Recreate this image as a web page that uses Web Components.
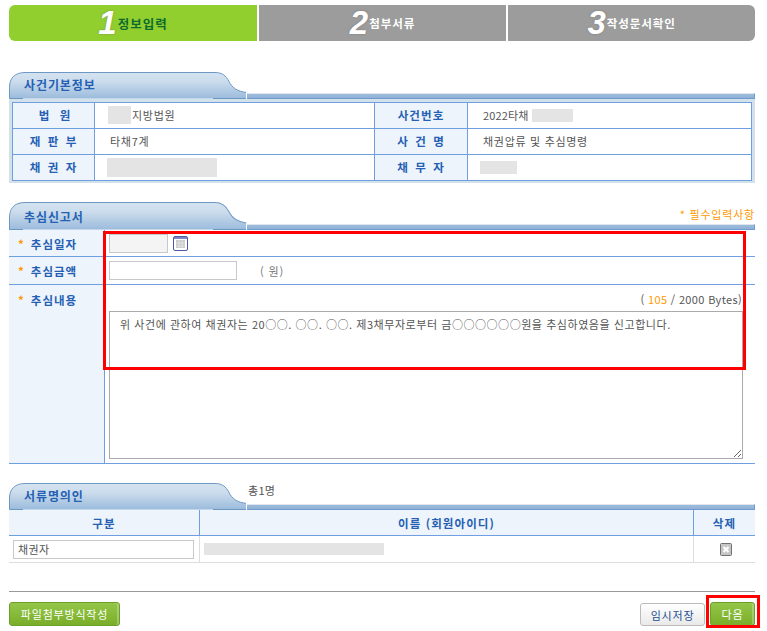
<!DOCTYPE html>
<html lang="ko">
<head>
<meta charset="utf-8">
<title>추심신고서</title>
<style>
  html, body { margin: 0; padding: 0; background: #fff; }
  body { font: 11px "Noto Sans CJK KR", "Liberation Sans", sans-serif; color: #555; }
</style>
</head>
<body>
<case-page>
  <wiz-steps>
    <wiz-step num="1" active>정보입력</wiz-step>
    <wiz-step num="2">첨부서류</wiz-step>
    <wiz-step num="3">작성문서확인</wiz-step>
  </wiz-steps>

  <sec-head style="margin-top:31px">사건기본정보</sec-head>
  <case-info></case-info>

  <sec-head style="margin-top:19px;height:28px;--name-top:5px">추심신고서<span slot="side" class="req">* 필수입력사항</span></sec-head>
  <report-form></report-form>

  <sec-head style="margin-top:19px">서류명의인<span slot="side">총1명</span></sec-head>
  <party-table></party-table>

  <page-foot></page-foot>
</case-page>

<script>
const KR = '"Noto Sans CJK KR", "Liberation Sans", sans-serif';

class CasePage extends HTMLElement {
  constructor() {
    super();
    this.attachShadow({ mode: 'open' }).innerHTML = `
      <style>
        :host { display: block; position: relative; width: 755px; height: 631px; padding: 5px 0 0 9px; box-sizing: border-box; }
        .mark { position: absolute; border: 3px solid #f00; box-sizing: border-box; pointer-events: none; }
        .m1 { left: 103px; top: 231px; width: 643px; height: 139px; }
        .m2 { left: 706px; top: 595px; width: 54px; height: 33px; }
      </style>
      <slot></slot>
      <div class="mark m1"></div>
      <div class="mark m2"></div>`;
  }
}

class WizSteps extends HTMLElement {
  constructor() {
    super();
    this.attachShadow({ mode: 'open' }).innerHTML = `
      <style>
        :host { display: grid; grid-template-columns: 248px 247px 247px; column-gap: 2px; height: 36px; border-radius: 6px; overflow: hidden; }
      </style>
      <slot></slot>`;
  }
}

class WizStep extends HTMLElement {
  constructor() {
    super();
    const num = this.getAttribute('num');
    this.attachShadow({ mode: 'open' }).innerHTML = `
      <style>
        :host { display: flex; align-items: center; justify-content: center; background: #9c9c9c; color: #fff; font: bold 11.5px ${KR}; letter-spacing: .9px; }
        :host([active]) { background: #91cf2f; color: #0d6b2b; font-size: 12.5px; letter-spacing: 1px; }
        b { font: italic bold 33px "Liberation Sans", sans-serif; color: #fff; letter-spacing: 0; margin-right: 1px; text-shadow: 0 0 2px rgba(90,90,90,.55); line-height: 36px; }
      </style>
      <b>${num}</b><span><slot></slot></span>`;
  }
}

class SecHead extends HTMLElement {
  constructor() {
    super();
    this.attachShadow({ mode: 'open' }).innerHTML = `
      <style>
        :host { display: flex; height: 27px; position: relative; font: bold 12px ${KR}; color: #2460b4; letter-spacing: .9px; }
        .tab { flex: 0 0 238px; position: relative; }
        svg { display: block; height: 100%; }
        .name { position: absolute; left: 15px; top: var(--name-top, 3px); line-height: 20px; }
        .rest { flex: 1; display: flex; flex-direction: column; justify-content: flex-end; }
        .side { flex: 1; display: flex; font: 11px ${KR}; color: #555; letter-spacing: .3px; }
        ::slotted(span) { line-height: 14px; margin: 0 0 0 1px; }
        ::slotted(.req) { margin: 5px 0 0 auto; color: #f90; letter-spacing: .8px; }
        .bar { height: 6px; box-sizing: border-box; background: linear-gradient(#9cbbdc, #90b1d6); border-top: 1px solid #dfe5ec; border-bottom: 1px solid #6f9bd0; border-right: 1px solid #6f9bd0; }
      </style>
      <div class="tab">
        <svg width="238" viewBox="0 0 238 27" preserveAspectRatio="none">
          <defs><linearGradient id="g" x1="0" y1="0" x2="0" y2="1"><stop offset="0" stop-color="#d5e3f0"/><stop offset=".35" stop-color="#cbdcec"/><stop offset="1" stop-color="#9bbbdc"/></linearGradient></defs>
          <path d="M.5 26.5V15C.5 6 6 .5 16 .5H206c7 0 11 3 14 9 3 6 8 10 18 11v6z" fill="url(#g)" stroke="#6e98c4"/>
          <path d="M14 26.5H204" stroke="#c4d7ea"/>
          <path d="M237.5 20v7" stroke="#fff"/>
        </svg>
        <span class="name"><slot></slot></span>
      </div>
      <div class="rest">
        <div class="side"><slot name="side"></slot></div>
        <div class="bar"></div>
      </div>`;
  }
}

const cellCss = `
  .lab { background: #eef4fb; color: #2460b4; font: bold 11.5px ${KR}; display: flex; align-items: center; justify-content: center; letter-spacing: 1.1px; padding-bottom: 2px; }
  .val { display: flex; align-items: center; min-width: 0; padding-bottom: 1px; }
  .blk { display: inline-block; background: #e4e4e4; }
`;

class CaseInfo extends HTMLElement {
  constructor() {
    super();
    this.attachShadow({ mode: 'open' }).innerHTML = `
      <style>
        :host { display: block; height: 84px; padding: 3px 3px 0; box-sizing: border-box; background: #d3e1eb; }
        ${cellCss}
        .grid { display: grid; grid-template-columns: 82px 280px 93px 1fr; grid-template-rows: 26px 26px 25px; background: #fff; border: 1px solid #6f9fe0; box-sizing: border-box; }
        .grid > div { border-bottom: 1px solid #6f9fe0; box-sizing: border-box; }
        .grid > div:nth-last-child(-n+4) { border-bottom: 0; }
        .grid > div:nth-child(4n+1), .grid > div:nth-child(4n+2), .grid > div:nth-child(4n+3) { border-right: 1px solid #6f9fe0; }
        .val { font-size: 11px; color: #555; letter-spacing: .7px; }
        .sp { word-spacing: 2px; }
      </style>
      <div class="grid">
        <div class="lab" style="word-spacing:5px;padding-left:3px">법 원</div>
        <div class="val" style="padding-left:13px"><span class="blk" style="width:23px;height:18px;margin-right:1px"></span>지방법원</div>
        <div class="lab">사건번호</div>
        <div class="val" style="padding-left:15px;letter-spacing:.15px">2022타채<span class="blk" style="width:41px;height:13px;margin-left:3px"></span></div>
        <div class="lab sp">재 판 부</div>
        <div class="val" style="padding-left:15px">타채7계</div>
        <div class="lab sp">사 건 명</div>
        <div class="val" style="padding-left:15px">채권압류 및 추심명령</div>
        <div class="lab sp">채 권 자</div>
        <div class="val" style="padding-left:12px"><span class="blk" style="width:110px;height:19px"></span></div>
        <div class="lab sp">채 무 자</div>
        <div class="val" style="padding-left:12px"><span class="blk" style="width:37px;height:13px"></span></div>
      </div>`;
  }
}

class ReportForm extends HTMLElement {
  constructor() {
    super();
    this.attachShadow({ mode: 'open' }).innerHTML = `
      <style>
        :host { display: grid; grid-template-columns: 96px 1fr; grid-template-rows: 27px 28px 179px; box-sizing: border-box; }
        .lab { background: #eef4fb; color: #2460b4; font: bold 11.5px ${KR}; letter-spacing: 1px; border-right: 1px solid #6f9fe0; border-bottom: 1px solid #6f9fe0; padding: 1px 0 0 9px; display: flex; align-items: center; }
        .lab i { color: #f90; font-style: normal; margin-right: 6px; }
        .lab.top { align-items: flex-start; padding-top: 7px; }
        .val { border-bottom: 1px solid #6f9fe0; padding-left: 4px; display: flex; align-items: center; color: #777; font-size: 11px; min-width: 0; }
        input { box-sizing: border-box; height: 19px; border: 1px solid #c8c8c8; padding: 0; margin: 0; display: block; outline: 0; }
        .date { width: 59px; background: #f4f4f4; }
        .amt { width: 128px; background: #fff; }
        svg { display: block; margin-left: 5px; }
        .unit { margin-left: 23px; letter-spacing: .9px; }
        .memo { display: block; padding: 0 0 0 4px; }
        .count { height: 26px; line-height: 28px; text-align: right; padding-right: 13px; color: #555; letter-spacing: .35px; }
        .count em { font-style: normal; color: #f90; }
        textarea { display: block; box-sizing: border-box; width: 634px; height: 148px; border: 1px solid #aaa; padding: 6px 10px; margin: 0; outline: 0; font: 11px ${KR}; color: #555; letter-spacing: .55px; line-height: 13px; }
      </style>
      <div class="lab"><i>*</i>추심일자</div>
      <div class="val">
        <input class="date" type="text" aria-label="추심일자">
        <svg width="15" height="15" viewBox="0 0 15 15"><rect x=".5" y=".5" width="14" height="14" rx="1.5" fill="#fff" stroke="#4d58a8"/><rect x="1" y="1" width="13" height="2" fill="#7d86c4"/><rect x="3" y="4" width="9" height="8" fill="#c9c9c9"/><path d="M6 4v8M9 4v8M3 7h9M3 10h9" stroke="#e2e2e2"/></svg>
      </div>
      <div class="lab"><i>*</i>추심금액</div>
      <div class="val"><input class="amt" type="text" aria-label="추심금액"><span class="unit">( 원)</span></div>
      <div class="lab top"><i>*</i>추심내용</div>
      <div class="val memo">
        <div class="count">( <em>105</em> / 2000 Bytes)</div>
        <textarea aria-label="추심내용">위 사건에 관하여 채권자는 20○○. ○○. ○○. 제3채무자로부터 금○○○○○○원을 추심하였음을 신고합니다.</textarea>
      </div>`;
  }
}

class PartyTable extends HTMLElement {
  constructor() {
    super();
    this.attachShadow({ mode: 'open' }).innerHTML = `
      <style>
        :host { display: grid; grid-template-columns: 190px 494px 62px; grid-template-rows: 26px 27px; }
        .lab { background: #eef4fb; color: #2460b4; font: bold 11.5px ${KR}; letter-spacing: 1.1px; display: flex; align-items: center; justify-content: center; border-bottom: 1px solid #6f9fe0; box-sizing: border-box; }
        .lab + .lab { border-left: 1px solid #6f9fe0; }
        .cell { border-bottom: 1px solid #ddd; box-sizing: border-box; display: flex; align-items: center; font-size: 11px; color: #555; }
        .cell + .cell { border-left: 1px solid #ddd; }
        .box { width: 181px; height: 19px; margin-left: 4px; border: 1px solid #c8c8c8; box-sizing: border-box; padding-left: 4px; line-height: 17px; letter-spacing: .4px; }
        .blk { width: 180px; height: 12px; background: #e4e4e4; margin-left: 4px; }
        svg { display: block; margin: 0 auto; position: relative; left: 1px; }
      </style>
      <div class="lab">구분</div>
      <div class="lab">이름 (회원아이디)</div>
      <div class="lab">삭제</div>
      <div class="cell"><span class="box">채권자</span></div>
      <div class="cell"><span class="blk"></span></div>
      <div class="cell">
        <svg width="12" height="13" viewBox="0 0 12 13"><rect x=".5" y=".5" width="11" height="12" rx="1" fill="#c6c6c6" stroke="#707070"/><path d="M3.5 4l5 5M8.5 4l-5 5" stroke="#fff" stroke-width="2"/></svg>
      </div>`;
  }
}

class PageFoot extends HTMLElement {
  constructor() {
    super();
    this.attachShadow({ mode: 'open' }).innerHTML = `
      <style>
        :host { display: flex; align-items: flex-start; margin-top: 28px; border-top: 1px solid #999; padding-top: 10px; }
        .btn { height: 24px; box-sizing: border-box; border-radius: 3px; display: flex; align-items: center; justify-content: center; font: 11px ${KR}; letter-spacing: .8px; }
        .green { background: linear-gradient(#93c648, #7aae29); border: 1px solid #6c9e2a; box-shadow: inset -2px 0 0 rgba(255,255,255,.25); color: #fff; }
        .file { width: 111px; }
        .save { width: 65px; margin: 1px 0 0 auto; height: 23px; background: linear-gradient(#fff, #e9e9e9); border: 1px solid #bbb; color: #1d4f91; }
        .next { width: 45px; margin-left: 5px; }
      </style>
      <div class="btn green file">파일첨부방식작성</div>
      <div class="btn save">임시저장</div>
      <div class="btn green next">다음</div>`;
  }
}

customElements.define('case-page', CasePage);
customElements.define('wiz-steps', WizSteps);
customElements.define('wiz-step', WizStep);
customElements.define('sec-head', SecHead);
customElements.define('case-info', CaseInfo);
customElements.define('report-form', ReportForm);
customElements.define('party-table', PartyTable);
customElements.define('page-foot', PageFoot);
</script>
</body>
</html>
